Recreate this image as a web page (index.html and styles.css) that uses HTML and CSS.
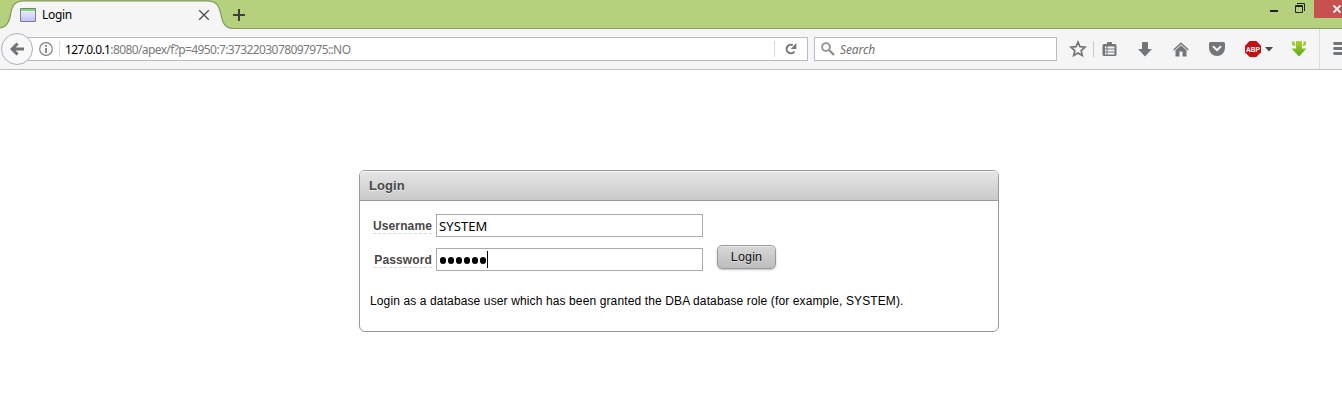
FILE: index.html
```html
<!DOCTYPE html>
<html lang="en">
<head>
<meta charset="utf-8">
<title>Login</title>
<link rel="stylesheet" href="styles.css">
</head>
<body>
<header class="titlebar">
  <div class="tab">
    <svg class="tab-shape" width="236" height="29" viewBox="0 0 236 29"><path d="M0 29V28C7 27 9 22 10.500 15C12 5 15 .8 24 .8H207C216 .8 219 5 221 15C222.500 23 225 28 233 28.500H236V29Z" fill="#f5f5f5"/><path d="M0 28C7 27 9 22 10.500 15C12 5 15 .8 24 .8H207C216 .8 219 5 221 15C222.500 23 225 28 233 28.500H236" fill="none" stroke="#819a58" stroke-width="1.200"/></svg>
    <svg class="favicon" width="16" height="14" viewBox="0 0 16 14"><defs><linearGradient id="pane" x2="0" y2="1"><stop stop-color="#f2f2ff"/><stop offset="1" stop-color="#c0c0ff"/></linearGradient></defs><path d="M.5 .5h15v13H.5z" fill="url(#pane)" stroke="#7d7d7d"/><path d="M1 1h14v2H1z" fill="#70dc70"/><path d="M1 3h14v1H1z" fill="#fff"/></svg>
    <span class="tab-title">Login</span>
    <svg class="tab-close" width="12" height="12" viewBox="0 0 12 12"><path d="M1.200 1.200l9.600 9.600M10.800 1.200L1.200 10.800" stroke="#4c4c4c" stroke-width="1.300"/></svg>
  </div>
  <svg class="new-tab" width="12" height="12" viewBox="0 0 12 12"><path d="M6 0v12M0 6h12" stroke="#414141" stroke-width="2"/></svg>
  <div class="window-buttons">
    <svg width="8" height="2" viewBox="0 0 8 2"><path d="M0 0h8v2H0z" fill="#222"/></svg>
    <svg class="restore" width="10" height="10" viewBox="0 0 10 10"><path d="M2 .5h7.500V8" fill="none" stroke="#222"/><path d="M.5 2.500h7v7h-7zM0 3.500h8" fill="none" stroke="#222"/></svg>
    <div class="close-window"><svg width="8" height="8" viewBox="0 0 8 8"><path d="M.5 .5l7 7M7.500 .5l-7 7" stroke="#fff" stroke-width="1.800"/></svg></div>
  </div>
</header>
<nav class="toolbar">
  <div class="back"><svg width="14" height="14" viewBox="0 0 14 14"><path d="M0 7l6.500-6.500 2.100 2.100-3 3H14v3H5.600l3 3-2.100 2z" fill="#707376"/></svg></div>
  <div class="address">
    <svg class="info" width="14" height="14" viewBox="0 0 14 14"><circle cx="7" cy="7" r="6.300" fill="none" stroke="#808080" stroke-width="1.200"/><path d="M6.100 3h1.900v1.800H6.100zM6.100 6h1.900v5H6.100z" fill="#808080"/></svg>
    <span class="rule"></span>
    <span class="url"><b>127.0.0.1</b>:8080/apex/f?p=4950:7:3732203078097975::NO</span>
    <span class="rule reload-rule"></span>
    <svg class="reload" width="12" height="12" viewBox="0 0 12 12"><path d="M9.400 8.500A4.300 4.300 0 1 1 7.800 2.200" fill="none" stroke="#757575" stroke-width="2"/><path d="M11.300 0v6H5.800z" fill="#757575"/></svg>
  </div>
  <div class="search">
    <svg width="14" height="14" viewBox="0 0 14 14"><circle cx="5" cy="5" r="3.900" fill="none" stroke="#929292" stroke-width="1.900"/><path d="M8 8l5 5" stroke="#929292" stroke-width="2.400"/></svg>
    <span class="search-hint">Search</span>
  </div>
  <div class="tools">
    <span class="cell w30"><svg width="18" height="18" viewBox="0 0 18 18"><path d="M9 2.200l2 4.500 5 .5-3.800 3.400 1.100 5L9 13l-4.300 2.600 1.100-5L2 7.200l5-.5z" fill="none" stroke="#737679" stroke-width="1.700"/></svg></span>
    <span class="tool-rule"></span>
    <span class="cell w31"><svg width="15" height="15" viewBox="0 0 15 15"><path d="M5 2V1q0-1 1-1h3q1 0 1 1v1h3q1.500 0 1.500 1.500v9q0 1.500-1.500 1.500H2Q.5 14 .5 12.500V3.500Q.5 2 2 2z" fill="#737679"/><path d="M3 4.500h1.500v2H3zM5.500 4.500H12.500v2h-7zM3 7.500h1.500v2H3zM5.500 7.500H12.500v2h-7zM3 10.500h1.500v2H3zM5.500 10.500H12.500v2h-7z" fill="#f5f5f5"/></svg></span>
    <span class="cell w40"><svg width="14" height="15" viewBox="0 0 14 15"><path d="M4 1q0-1 1-1h4q1 0 1 1v6h4l-7 7.500L0 7h4z" fill="#737679"/></svg></span>
    <span class="cell w32"><svg width="16" height="15" viewBox="0 0 16 15"><path d="M.7 8L8 1.200 15.300 8" fill="none" stroke="#737679" stroke-width="1.500"/><path d="M2.500 8.300L8 3.200l5.500 5.100V14.500h-4V9.500h-3v5h-4z" fill="#737679"/></svg></span>
    <span class="cell w40"><svg width="16" height="14" viewBox="0 0 16 14"><path d="M1.500 0h13Q16 0 16 1.500V6A8 8 0 0 1 0 6V1.500Q0 0 1.500 0z" fill="#737679"/><path d="M4.500 4.800L8 8.200l3.500-3.400" fill="none" stroke="#f5f5f5" stroke-width="2" stroke-linecap="round"/></svg></span>
    <span class="cell abp"><svg class="abp-badge" width="16" height="16" viewBox="0 0 16 16"><path d="M4.700 0h6.600L16 4.700v6.600L11.300 16H4.700L0 11.300V4.700z" fill="#c80c10"/><text x="1" y="11" textLength="14" lengthAdjust="spacingAndGlyphs" class="abp-label">ABP</text></svg><svg class="caret" width="8" height="5" viewBox="0 0 8 5"><path d="M0 0h8L4 4.500z" fill="#4a4a4a"/></svg></span>
    <span class="cell w40"><svg width="16" height="16" viewBox="0 0 16 16"><defs><linearGradient id="leaf" x2="0" y2="1"><stop stop-color="#a5d42c"/><stop offset="1" stop-color="#61a813"/></linearGradient></defs><path d="M5 0h6v7.500h4.500L8 15.500.5 7.500H5z" fill="url(#leaf)"/><path d="M1 .5h2.500V4H1zM12.500 .5H15V4h-2.500zM2.500 3h1.800v2H2.500zM11.700 3h1.800v2h-1.800z" fill="#9aca2b"/></svg></span>
    <span class="menu"><svg width="14" height="13" viewBox="0 0 14 13"><path d="M1.500 1.500H14M1.500 6.500H14M1.500 11.500H14" stroke="#737679" stroke-width="2.800" stroke-linecap="round"/></svg></span>
  </div>
</nav>
<main class="page">
  <section class="region">
    <h1 class="region-title">Login</h1>
    <div class="region-body">
      <div class="field"><label class="label"><span class="label-text username">Username</span></label><div class="input"><span class="value">SYSTEM</span></div></div>
      <div class="field"><label class="label"><span class="label-text password">Password</span></label><div class="input"><span class="dots"><i></i><i></i><i></i><i></i><i></i><i></i></span><span class="cursor"></span></div><button class="login">Login</button></div>
      <p class="note">Login as a database user which has been granted the DBA database role (for example, SYSTEM).</p>
    </div>
  </section>
</main>
</body>
</html>
```
FILE: styles.css
```css
* { box-sizing: border-box; }
body { margin: 0; width: 1342px; height: 415px; overflow: hidden; background: #fff; font-family: "Liberation Sans", Arial, sans-serif; font-size: 12px; color: #000; }
svg { display: block; flex: none; }
.titlebar { height: 29px; display: flex; background: #b5d17e; border-bottom: 1px solid #899c67; }
.tab { position: relative; width: 232px; height: 29px; flex: none; display: flex; padding-left: 20px; }
.tab-shape { position: absolute; left: 0; top: 0; }
.favicon { position: relative; margin-top: 8px; }
.tab-title { position: relative; margin-left: 6px; width: 156px; line-height: 30px; font-family: "Noto Sans", sans-serif; font-size: 12px; letter-spacing: -0.3px; }
.tab-close { position: relative; margin-top: 9px; }
.new-tab { margin: 9px 0 0 1px; }
.window-buttons { margin-left: auto; display: flex; width: 72px; }
.window-buttons > svg:first-child { margin-top: 10px; }
.restore { margin: 3px 0 0 17px; }
.close-window { width: 28px; height: 18px; margin-left: 9px; background: #c75050; padding: 5px 0 0 19px; overflow: hidden; flex: none; }
.toolbar { height: 41px; display: flex; background: #f5f5f5; border-bottom: 1px solid #bfc0c1; }
.back { position: relative; z-index: 1; flex: none; width: 32px; height: 32px; margin: 4px 0 0 1px; border: 1px solid #aab2bd; border-radius: 50%; background: #f8f8f8; display: flex; align-items: center; justify-content: center; }
.address { width: 785px; height: 24px; flex: none; margin: 8px 0 0 -10px; background: #fff; border: 1px solid #b5bcc4; display: flex; align-items: center; }
.info { margin-left: 15px; }
.rule { width: 1px; height: 16px; background: #d8d8d8; flex: none; margin-left: 6px; }
.url { margin-left: 5px; width: 709px; padding-top: 2px; white-space: nowrap; font-family: "Noto Sans", sans-serif; color: #7a7a7a; line-height: 20px; letter-spacing: -0.61px; }
.url b { font-weight: normal; color: #000; }
.reload-rule { margin-left: 0; }
.reload { margin-left: 10px; }
.search { width: 243px; height: 24px; flex: none; margin: 8px 0 0 6px; background: #fff; border: 1px solid #b5bcc4; display: flex; align-items: center; padding-left: 6px; }
.search-hint { margin-left: 5px; padding-top: 2px; font-family: "Noto Sans", sans-serif; font-style: italic; color: #707070; letter-spacing: -0.1px; line-height: 20px; }
.tools { display: flex; height: 40px; margin-left: 6px; flex: none; }
.cell { display: flex; flex: none; align-items: center; justify-content: center; }
.w30 { width: 30px; }
.w31 { width: 31px; }
.w32 { width: 32px; }
.w40 { width: 40px; }
.tool-rule { width: 1px; height: 16px; background: #c8c8c8; margin-top: 12px; }
.abp { width: 42px; justify-content: flex-start; padding-left: 8px; }
.abp-badge { overflow: visible; }
.abp-label { font: bold 8px "Liberation Sans", sans-serif; fill: #fff; }
.caret { margin-left: 4px; }
.menu { width: 23px; padding: 13px 0 0 13px; border-left: 1px solid #dedede; overflow: hidden; }
.page { height: 345px; padding: 100px 0 0 359px; }
.region { width: 640px; height: 162px; border: 1px solid #999; border-radius: 6px; background: #fff; }
.region-title { margin: 0; height: 30px; padding-left: 9px; border-bottom: 1px solid #999; border-radius: 5px 5px 0 0; background: linear-gradient(#e6e6e6, #c9c9c9); box-shadow: inset 0 1px 0 #f5f5f5; color: #484848; font-size: 13px; line-height: 29px; letter-spacing: 0.1px; text-shadow: 0 1px 0 #eee; }
.region-body { padding: 13px 10px 0 10px; }
.field { display: flex; height: 34px; }
.label { width: 62px; display: flex; justify-content: flex-end; }
.label-text { height: 20px; line-height: 24px; font-weight: bold; color: #484848; border-bottom: 1px dashed #d8d8d8; letter-spacing: 0.13px; white-space: nowrap; }
.input { width: 267px; height: 23px; margin-left: 4px; border: 1px solid #aaa; display: flex; align-items: center; padding-left: 2px; }
.value { font-family: "Noto Sans", sans-serif; font-size: 13px; line-height: 19px; padding-top: 2px; letter-spacing: 0.1px; }
.dots { display: flex; gap: 2px; padding: 2px 0 0 1px; }
.dots i { width: 6px; height: 7px; background: #000; border-radius: 3px; }
.cursor { width: 1px; height: 17px; background: #000; margin-left: 1px; }
.login { width: 59px; height: 24px; margin: -3px 0 0 14px; padding: 0; border: 1px solid #999; border-radius: 5px; background: linear-gradient(#d8d8d8, #bdbdbd); box-shadow: inset 0 1px 0 #eaeaea, 0 1px 2px rgba(0,0,0,.25); font: 12.5px "Liberation Sans", Arial, sans-serif; letter-spacing: 0.15px; color: #111; text-shadow: 0 1px 0 #ddd; }
.note { margin: 11px 0 0; line-height: 16px; letter-spacing: 0.122px; white-space: nowrap; }
```
